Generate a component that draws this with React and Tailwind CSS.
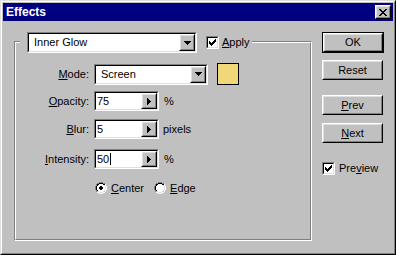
import React from "react";

const font = "font-['Liberation_Sans',Arial,sans-serif]";

function Raised({ className = "", innerClassName = "", children }) {
  return (
    <div className={`border border-t-white border-l-white border-r-black border-b-black ${className}`}>
      <div
        className={`h-full w-full border border-t-[#dfdfdf] border-l-[#dfdfdf] border-r-[#808080] border-b-[#808080] bg-[#c0c0c0] ${innerClassName}`}
      >
        {children}
      </div>
    </div>
  );
}

function Sunken({ className = "", innerClassName = "", children }) {
  return (
    <div className={`border border-t-[#808080] border-l-[#808080] border-r-white border-b-white ${className}`}>
      <div
        className={`h-full w-full border border-t-black border-l-black border-r-[#dfdfdf] border-b-[#dfdfdf] bg-white ${innerClassName}`}
      >
        {children}
      </div>
    </div>
  );
}

function DownArrow() {
  return (
    <svg width="7" height="4" viewBox="0 0 7 4" shapeRendering="crispEdges">
      <path d="M0 0h7v1H0zM1 1h5v1H1zM2 2h3v1H2zM3 3h1v1H3z" fill="#000" />
    </svg>
  );
}

function RightArrow() {
  return (
    <svg width="4" height="7" viewBox="0 0 4 7" shapeRendering="crispEdges">
      <path d="M0 0h1v7H0zM1 1h1v5H1zM2 2h1v3H2zM3 3h1v1H3z" fill="#000" />
    </svg>
  );
}

function Dropdown({ value, width }) {
  return (
    <Sunken className={`${width} h-[21px]`} innerClassName="flex items-stretch">
      <span className="flex flex-1 items-center pl-[5px] leading-none">{value}</span>
      <Raised className="w-[16px]" innerClassName="flex items-center justify-center">
        <DownArrow />
      </Raised>
    </Sunken>
  );
}

function SpinField({ value, caret = false }) {
  return (
    <Sunken className="h-[20px] w-[65px]" innerClassName="flex items-stretch">
      <span className="flex flex-1 items-center pl-[1px] leading-none">
        {value}
        {caret ? <span className="ml-[1px] inline-block h-[12px] w-px bg-black" /> : null}
      </span>
      <Raised className="w-[16px]" innerClassName="flex items-center justify-center">
        <RightArrow />
      </Raised>
    </Sunken>
  );
}

function Check() {
  return (
    <Sunken className="h-[13px] w-[13px]" innerClassName="flex items-center justify-center">
      <svg width="7" height="7" viewBox="0 0 7 7" shapeRendering="crispEdges">
        <path
          d="M6 0h1v3H6zM5 1h1v3H5zM4 2h1v3H4zM0 2h1v3H0zM1 3h1v3H1zM2 4h1v3H2zM3 3h1v3H3z"
          fill="#000"
        />
      </svg>
    </Sunken>
  );
}

function Radio({ checked }) {
  return (
    <svg width="12" height="12" viewBox="0 0 12 12" shapeRendering="crispEdges">
      <path d="M4 0h4v1H4zM2 1h2v1H2zM8 1h2v1H8zM1 2h1v2H1zM0 4h1v4H0zM1 8h1v2H1z" fill="#808080" />
      <path d="M4 1h4v1H4zM2 2h2v1H2zM8 2h2v1H8zM2 3h1v1H2zM1 4h1v4H1zM2 8h1v1H2z" fill="#000" />
      <path d="M10 2h1v2h-1zM11 4h1v4h-1zM10 8h1v2h-1zM8 10h2v1H8zM4 11h4v1H4zM2 10h2v1H2z" fill="#fff" />
      <path d="M9 3h1v1H9zM10 4h1v4h-1zM9 8h1v1H9zM8 9h1v1H8zM4 10h4v1H4zM3 9h1v1H3z" fill="#dfdfdf" />
      <path d="M4 2h4v1H4zM3 3h6v1H3zM2 4h8v4H2zM3 8h6v1H3zM4 9h4v1H4z" fill="#fff" />
      {checked ? <path d="M5 4h2v1H5zM4 5h4v2H4zM5 7h2v1H5z" fill="#000" /> : null}
    </svg>
  );
}

function Button({ children, isDefault = false, className = "" }) {
  const face = (
    <Raised className="h-full w-full" innerClassName="flex items-center justify-center leading-none">
      {children}
    </Raised>
  );
  if (isDefault) {
    return <div className={`h-[21px] w-[62px] border border-black ${className}`}>{face}</div>;
  }
  return <div className={`h-[20px] w-[61px] ${className}`}>{face}</div>;
}

function Field({ label, children }) {
  return (
    <div className="flex items-center">
      <span className="w-[74px] pr-[1px] text-right">{label}</span>
      <div className="ml-[4px] flex items-center">{children}</div>
    </div>
  );
}

export default function App() {
  return (
    <div className={`${font} text-[11px] text-black`}>
      <div className="h-[255px] w-[396px] border border-t-[#dfdfdf] border-l-[#dfdfdf] border-r-black border-b-black bg-[#c0c0c0]">
        <div className="flex h-full flex-col border border-t-white border-l-white border-r-[#808080] border-b-[#808080] p-px">
          <div className="flex h-[18px] items-center justify-between bg-[#000080] pl-[3px] pr-[2px]">
            <span className="text-[12px] font-bold leading-none text-white">Effects</span>
            <Raised className="h-[14px] w-[16px]" innerClassName="flex items-center justify-center">
              <svg width="8" height="7" viewBox="0 0 8 7" shapeRendering="crispEdges">
                <path
                  d="M0 0h2v1H0zM6 0h2v1H6zM1 1h2v1H1zM5 1h2v1H5zM2 2h4v1H2zM3 3h2v1H3zM2 4h4v1H2zM1 5h2v1H1zM5 5h2v1H5zM0 6h2v1H0zM6 6h2v1H6z"
                  fill="#000"
                />
              </svg>
            </Raised>
          </div>

          <div className="flex flex-1 pl-[11px] pt-[11px]">
            <div className="mt-[9px] h-[200px] w-[298px] border border-t-[#808080] border-l-[#808080] border-r-white border-b-white">
              <div className="flex h-full flex-col border border-t-white border-l-white border-r-[#808080] border-b-[#808080]">
                <div className="-mt-[11px] ml-[4px] flex h-[21px] items-center self-start bg-[#c0c0c0] pl-[7px] pr-[2px]">
                  <Dropdown value="Inner Glow" width="w-[170px]" />
                  <div className="ml-[9px]">
                    <Check />
                  </div>
                  <span className="ml-[3px]">
                    <u>A</u>pply
                  </span>
                </div>

                <div className="mt-[10px] flex flex-col">
                  <Field
                    label={
                      <>
                        <u>M</u>ode:
                      </>
                    }
                  >
                    <Dropdown value="Screen" width="w-[114px]" />
                    <div className="ml-[9px] h-[22px] w-[22px] border border-black bg-[#f0d878]" />
                  </Field>
                  <div className="mt-[6px]">
                    <Field
                      label={
                        <>
                          <u>O</u>pacity:
                        </>
                      }
                    >
                      <SpinField value="75" />
                      <span className="ml-[5px]">%</span>
                    </Field>
                  </div>
                  <div className="mt-[8px]">
                    <Field
                      label={
                        <>
                          <u>B</u>lur:
                        </>
                      }
                    >
                      <SpinField value="5" />
                      <span className="ml-[4px]">pixels</span>
                    </Field>
                  </div>
                  <div className="mt-[10px]">
                    <Field
                      label={
                        <>
                          <u>I</u>ntensity:
                        </>
                      }
                    >
                      <SpinField value="50" caret />
                      <span className="ml-[5px]">%</span>
                    </Field>
                  </div>
                  <div className="ml-[79px] mt-[11px] flex items-center">
                    <Radio checked />
                    <span className="ml-[4px]">
                      <u>C</u>enter
                    </span>
                    <span className="ml-[10px] flex">
                      <Radio />
                    </span>
                    <span className="ml-[4px]">
                      <u>E</u>dge
                    </span>
                  </div>
                </div>
              </div>
            </div>

            <div className="ml-[10px] flex flex-col">
              <Button isDefault>OK</Button>
              <Button className="mt-[7px]">Reset</Button>
              <Button className="mt-[15px]">
                <span>
                  <u>P</u>rev
                </span>
              </Button>
              <Button className="mt-[8px]">
                <span>
                  <u>N</u>ext
                </span>
              </Button>
              <div className="mt-[17px] flex items-center">
                <Check />
                <span className="ml-[4px]">
                  Pre<u>v</u>iew
                </span>
              </div>
            </div>
          </div>
        </div>
      </div>
    </div>
  );
}
